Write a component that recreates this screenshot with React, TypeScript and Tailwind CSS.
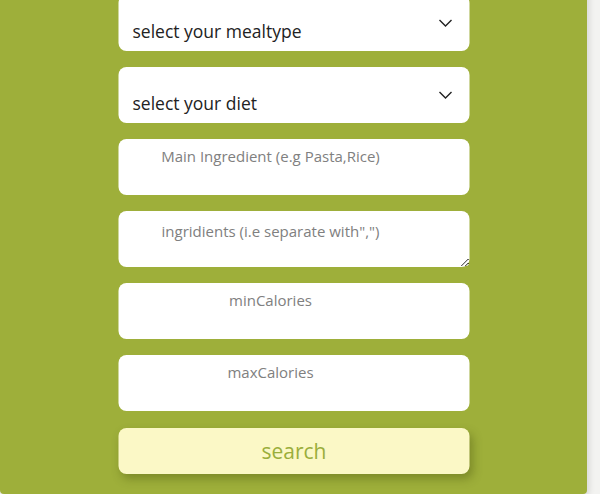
const fieldBox = "h-[56px] w-full rounded-lg bg-white";

function Chevron() {
  return (
    <svg width="14" height="8" viewBox="0 0 14 8" className="shrink-0 text-[#222]">
      <polyline points="1,1 7,7 13,1" fill="none" stroke="currentColor" strokeWidth="1.4" />
    </svg>
  );
}

function FakeSelect({ label }: { label: string }) {
  return (
    <div className={`${fieldBox} relative flex items-end pb-[7px] pl-[14px] text-[17.5px] text-[#222]`}>
      <span>{label}</span>
      <span className="absolute right-[17px] top-[24px]">
        <Chevron />
      </span>
    </div>
  );
}

const textField =
  "h-[56px] w-full rounded-lg bg-white pr-[60px] pl-[13px] text-center text-[15px] outline-none placeholder:text-[#808080]";

export default function App() {
  return (
    <div className="min-h-[500px] bg-[#f3f3f1] font-['Open_Sans','Noto_Sans',sans-serif]">
      <div className="w-[587px] mt-[-21px] rounded-b-[4px] bg-[#9eaf3a] pt-[16px] pb-[20px] shadow-[2px_2px_6px_rgba(0,0,0,0.12)]">
        <form className="mx-auto flex w-[351px] flex-col gap-[16px] translate-x-[0.5px]">
          <FakeSelect label="select your mealtype" />
          <FakeSelect label="select your diet" />
          <input className={`${textField} pt-0 pb-[22px]`} placeholder="Main Ingredient (e.g Pasta,Rice)" />
          <textarea className={`${textField} block pt-[9px]`} placeholder={'ingridients (i.e separate with",")'} />
          <input className={`${textField} pt-0 pb-[22px]`} placeholder="minCalories" />
          <input className={`${textField} pt-0 pb-[22px]`} placeholder="maxCalories" />
          <button
            type="button"
            className="mt-px h-[46px] w-full rounded-lg bg-[#fbf8c6] pt-[2px] text-[21px] text-[#9aae3c] shadow-[3px_5px_10px_rgba(60,70,10,0.35)]"
          >
            search
          </button>
        </form>
      </div>
    </div>
  );
}
